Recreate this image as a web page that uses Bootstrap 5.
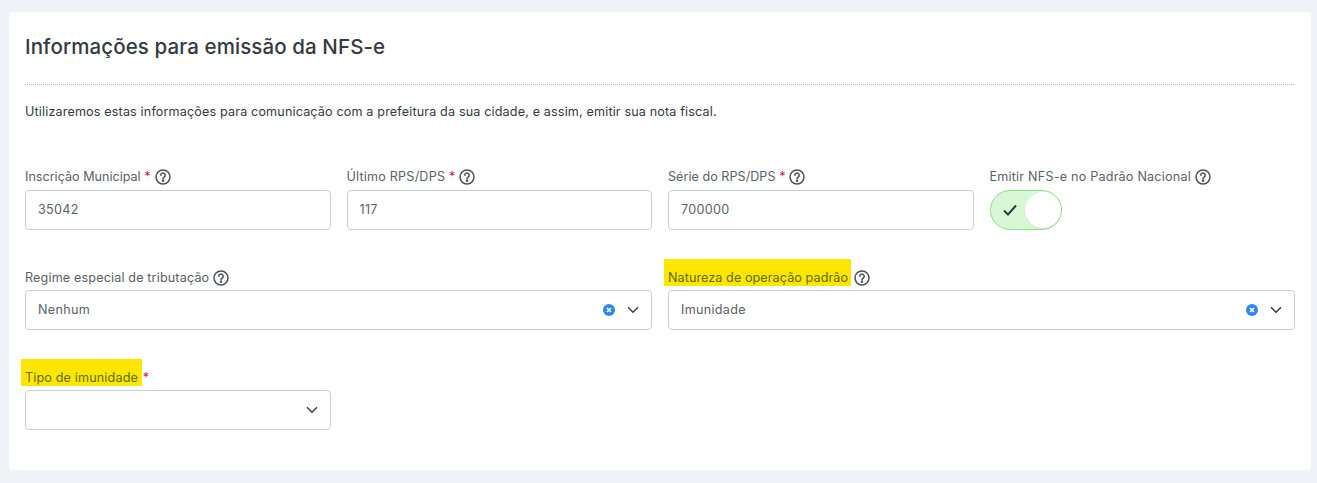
<!DOCTYPE html>
<html lang="pt-BR">
<head>
<meta charset="utf-8">
<title>NFS-e</title>
<link href="https://cdn.jsdelivr.net/npm/bootstrap@5.3.0/dist/css/bootstrap.min.css" rel="stylesheet">
<style>
html,body{height:100%}
body{background:#eff2f7;font-family:Inter,"Noto Sans",sans-serif;color:#343a40;overflow:hidden}
.painel{margin:12px 6px 0 9px;height:458px;background:#fff;border-radius:4px;padding:0 16px}
.titulo{font-size:20.5px;font-weight:500;line-height:24px;color:#343a40;margin:0;padding-top:23px;letter-spacing:.1px}
.pontilhado{border-top:1px dotted #a9b4c2;margin:25px 1px 0 0;height:0}
.intro{font-size:12.6px;line-height:18px;margin:18px 0 0;color:#343a40;letter-spacing:.15px}
.linha{--bs-gutter-x:16px;margin-top:0}
.r1{margin-top:46px}.r2,.r3{margin-top:37px}
.rotulo{font-size:12.6px;line-height:20px;height:20px;color:#5b6167;display:flex;align-items:center;white-space:nowrap;margin:0 0 3px;gap:4px;letter-spacing:.15px}
.r2 .rotulo,.r3 .rotulo{margin:1px 0 2px}
.esp-a{letter-spacing:0}.esp-b{letter-spacing:.03px}.esp-c{letter-spacing:.21px}.esp-d{letter-spacing:.08px;gap:6px}.esp-e{letter-spacing:.2px}
.obrig{color:#c2185b}
.realce{background:#ffe600;padding:11px 3px 1px 4px;margin:0 -3px 0 -4px;color:#5b6b10}
.r3 .realce{padding-right:4px}
.campo{height:40px;border:1px solid #c5cfdb;border-radius:4px;background:#fff;padding:0 12px;display:flex;align-items:center;font-size:12.6px;color:#5b6167;width:100%;letter-spacing:.3px}
.acoes{display:flex;align-items:center;gap:12px;margin-left:auto}
.chave{width:72px;height:40px;border-radius:20px;background:#d8f8d5;border:1px solid #8fe08c;display:flex;align-items:center;padding:0 0 0 12px;justify-content:space-between}
.bola{width:36px;height:36px;border-radius:50%;background:#fff;display:block;box-shadow:0 1px 2px rgba(0,0,0,.06)}
svg{display:block;flex:none}
</style>
</head>
<body>
<div class="painel">
  <h1 class="titulo">Informações para emissão da NFS-e</h1>
  <div class="pontilhado"></div>
  <p class="intro">Utilizaremos estas informações para comunicação com a prefeitura da sua cidade, e assim, emitir sua nota fiscal.</p>

  <div class="row linha r1">
    <div class="col-3">
      <label class="rotulo esp-a"><span>Inscrição Municipal <span class="obrig">*</span></span>
        <svg width="16" height="16" viewBox="0 0 16 16" fill="none" stroke="#4a4f55" stroke-width="1.5"><circle cx="8" cy="8" r="7"/><path d="M5.8 6.2a2.2 2.2 0 1 1 3.4 1.9c-.8.5-1.2.9-1.2 1.7" stroke-linecap="round"/><circle cx="8" cy="11.8" r=".5" fill="#4a4f55"/></svg></label>
      <div class="campo">35042</div>
    </div>
    <div class="col-3">
      <label class="rotulo esp-e"><span>Último RPS/DPS <span class="obrig">*</span></span>
        <svg width="16" height="16" viewBox="0 0 16 16" fill="none" stroke="#4a4f55" stroke-width="1.5"><circle cx="8" cy="8" r="7"/><path d="M5.8 6.2a2.2 2.2 0 1 1 3.4 1.9c-.8.5-1.2.9-1.2 1.7" stroke-linecap="round"/><circle cx="8" cy="11.8" r=".5" fill="#4a4f55"/></svg></label>
      <div class="campo">117</div>
    </div>
    <div class="col-3">
      <label class="rotulo esp-b"><span>Série do RPS/DPS <span class="obrig">*</span></span>
        <svg width="16" height="16" viewBox="0 0 16 16" fill="none" stroke="#4a4f55" stroke-width="1.5"><circle cx="8" cy="8" r="7"/><path d="M5.8 6.2a2.2 2.2 0 1 1 3.4 1.9c-.8.5-1.2.9-1.2 1.7" stroke-linecap="round"/><circle cx="8" cy="11.8" r=".5" fill="#4a4f55"/></svg></label>
      <div class="campo">700000</div>
    </div>
    <div class="col-3">
      <label class="rotulo esp-c"><span>Emitir NFS-e no Padrão Nacional</span>
        <svg width="16" height="16" viewBox="0 0 16 16" fill="none" stroke="#4a4f55" stroke-width="1.5"><circle cx="8" cy="8" r="7"/><path d="M5.8 6.2a2.2 2.2 0 1 1 3.4 1.9c-.8.5-1.2.9-1.2 1.7" stroke-linecap="round"/><circle cx="8" cy="11.8" r=".5" fill="#4a4f55"/></svg></label>
      <div class="chave">
        <svg width="14" height="12" viewBox="0 0 14 12" fill="none" stroke="#343a40" stroke-width="2"><path d="M1 6.5 5 10.5 13 1.5"/></svg>
        <span class="bola"></span>
      </div>
    </div>
  </div>

  <div class="row linha r2">
    <div class="col-6">
      <label class="rotulo"><span>Regime especial de tributação</span>
        <svg width="16" height="16" viewBox="0 0 16 16" fill="none" stroke="#4a4f55" stroke-width="1.5"><circle cx="8" cy="8" r="7"/><path d="M5.8 6.2a2.2 2.2 0 1 1 3.4 1.9c-.8.5-1.2.9-1.2 1.7" stroke-linecap="round"/><circle cx="8" cy="11.8" r=".5" fill="#4a4f55"/></svg></label>
      <div class="campo">Nenhum
        <span class="acoes">
          <svg width="12" height="12" viewBox="0 0 12 12"><circle cx="6" cy="6" r="6" fill="#2f86eb"/><path d="M4 4l4 4M8 4l-4 4" stroke="#fff" stroke-width="1.6"/></svg>
          <svg width="12" height="8" viewBox="0 0 12 8" fill="none" stroke="#343a40" stroke-width="1.4"><path d="M1 1.2 6 6.2 11 1.2"/></svg>
        </span>
      </div>
    </div>
    <div class="col-6">
      <label class="rotulo esp-d"><span><span class="realce">Natureza de operação padrão</span></span>
        <svg width="16" height="16" viewBox="0 0 16 16" fill="none" stroke="#4a4f55" stroke-width="1.5"><circle cx="8" cy="8" r="7"/><path d="M5.8 6.2a2.2 2.2 0 1 1 3.4 1.9c-.8.5-1.2.9-1.2 1.7" stroke-linecap="round"/><circle cx="8" cy="11.8" r=".5" fill="#4a4f55"/></svg></label>
      <div class="campo">Imunidade
        <span class="acoes">
          <svg width="12" height="12" viewBox="0 0 12 12"><circle cx="6" cy="6" r="6" fill="#2f86eb"/><path d="M4 4l4 4M8 4l-4 4" stroke="#fff" stroke-width="1.6"/></svg>
          <svg width="12" height="8" viewBox="0 0 12 8" fill="none" stroke="#343a40" stroke-width="1.4"><path d="M1 1.2 6 6.2 11 1.2"/></svg>
        </span>
      </div>
    </div>
  </div>

  <div class="row linha r3">
    <div class="col-3">
      <label class="rotulo"><span><span class="realce">Tipo de imunidade</span> <span class="obrig">*</span></span></label>
      <div class="campo">
        <span class="acoes">
          <svg width="12" height="8" viewBox="0 0 12 8" fill="none" stroke="#343a40" stroke-width="1.4"><path d="M1 1.2 6 6.2 11 1.2"/></svg>
        </span>
      </div>
    </div>
  </div>
</div>
<script src="https://cdn.jsdelivr.net/npm/bootstrap@5.3.0/dist/js/bootstrap.bundle.min.js"></script>
</body>
</html>
